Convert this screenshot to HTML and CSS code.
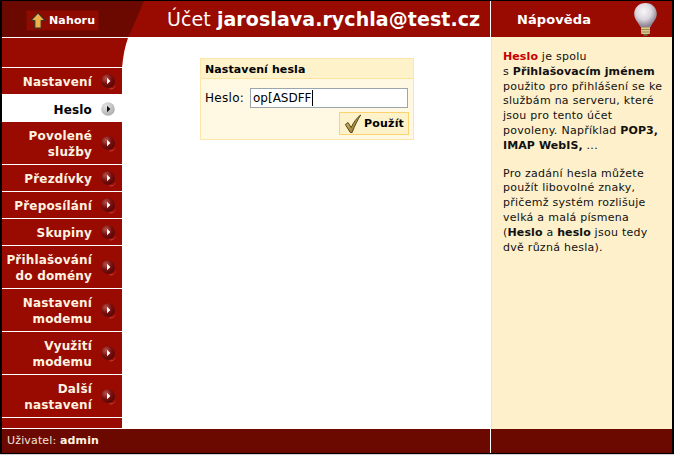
FILE: index.html
```html
<!DOCTYPE html>
<html lang="cs">
<head>
<meta charset="utf-8">
<title>Nastavení hesla</title>
<link rel="stylesheet" href="styles.css">
</head>
<body>
<svg class="defs" width="0" height="0" aria-hidden="true">
  <defs>
    <radialGradient id="ball" cx="0.35" cy="0.3" r="0.8">
      <stop offset="0" stop-color="#b5554f"/><stop offset="0.5" stop-color="#7a1010"/><stop offset="1" stop-color="#4a0505"/>
    </radialGradient>
    <radialGradient id="ballGrey" cx="0.35" cy="0.3" r="0.8">
      <stop offset="0" stop-color="#e4e4e4"/><stop offset="1" stop-color="#a9a9a9"/>
    </radialGradient>
    <radialGradient id="bulb" cx="0.42" cy="0.35" r="0.62">
      <stop offset="0" stop-color="#f8f6f8"/><stop offset="0.55" stop-color="#dcd6de"/><stop offset="1" stop-color="#8f8496"/>
    </radialGradient>
    <linearGradient id="gold" x1="0" y1="0" x2="1" y2="1">
      <stop offset="0" stop-color="#ecd07c"/><stop offset="1" stop-color="#7d5e14"/>
    </linearGradient>
    <symbol id="arrow" viewBox="0 0 16 16">
      <path d="M9 15.500a6.500 6.500 0 0 0 6-4.500 7 7 0 0 1-7 3.500z" fill="#c2453c"/>
      <circle cx="7" cy="7" r="6.800" fill="url(#ball)"/>
      <path d="M6 3.800l3.400 3.200-3.400 3.200z" fill="#fff"/>
    </symbol>
    <symbol id="arrowCur" viewBox="0 0 16 16">
      <circle cx="7" cy="7" r="6.800" fill="url(#ballGrey)"/>
      <path d="M6 3.800l3.400 3.200-3.400 3.200z" fill="#111"/>
    </symbol>
  </defs>
</svg>
<div class="frame">
  <header class="top">
    <div class="top-main">
      <div class="top-left">
        <a class="up" href="#">
          <svg class="up-icon" width="16" height="17" viewBox="0 0 16 17"><path d="M8 .8L15.200 8.500H11.200V16H4.800V8.500H.8z" fill="#eeb14a" stroke="#3a3226" stroke-width="1.200" stroke-linejoin="round"/></svg>
          <span>Nahoru</span>
        </a>
      </div>
      <h1 class="title">Účet <b>jaroslava.rychla@test.cz</b></h1>
    </div>
    <div class="top-help">
      <span class="help-title">Nápověda</span>
      <svg class="bulb" width="25" height="34" viewBox="0 0 25 34">
        <rect x="8" y="23" width="9" height="9" rx="1" fill="#d8c98e"/>
        <path d="M8 25h9M8 27.500h9M8 30h9" stroke="#9a8a55"/>
        <path d="M10 32h5l-1 2h-3z" fill="#6d6246"/>
        <path d="M12.500 1C5.800 1 1.200 5.800 1.200 12c0 5 3.800 8 6.300 13h10c2.500-5 6.300-8 6.300-13C23.800 5.800 19.200 1 12.500 1z" fill="url(#bulb)"/>
      </svg>
    </div>
  </header>
  <div class="middle">
    <nav class="side">
      <div class="side-top"></div>
      <a class="item" href="#"><span>Nastavení</span><svg class="ic"><use href="#arrow"/></svg></a>
      <a class="item cur" href="#"><span>Heslo</span><svg class="ic"><use href="#arrowCur"/></svg></a>
      <a class="item" href="#"><span>Povolené<br>služby</span><svg class="ic"><use href="#arrow"/></svg></a>
      <a class="item" href="#"><span>Přezdívky</span><svg class="ic"><use href="#arrow"/></svg></a>
      <a class="item" href="#"><span>Přeposílání</span><svg class="ic"><use href="#arrow"/></svg></a>
      <a class="item" href="#"><span>Skupiny</span><svg class="ic"><use href="#arrow"/></svg></a>
      <a class="item" href="#"><span>Přihlašování<br>do domény</span><svg class="ic"><use href="#arrow"/></svg></a>
      <a class="item" href="#"><span>Nastavení<br>modemu</span><svg class="ic"><use href="#arrow"/></svg></a>
      <a class="item" href="#"><span>Využití<br>modemu</span><svg class="ic"><use href="#arrow"/></svg></a>
      <a class="item" href="#"><span>Další<br>nastavení</span><svg class="ic"><use href="#arrow"/></svg></a>
      <div class="side-end"></div>
    </nav>
    <main class="content">
      <section class="box">
        <h2 class="box-head">Nastavení hesla</h2>
        <div class="box-body">
          <div class="row">
            <label class="lbl">Heslo:</label>
            <div class="field"><span class="val">op[ASDFF</span></div>
          </div>
          <div class="actions">
            <button class="btn" type="button">
              <svg width="18" height="20" viewBox="0 0 20 20" preserveAspectRatio="none"><path d="M1.500 10.500L4.500 8.500L8 13.500C10.500 8.500 13.500 4.500 18.500 1C15 6 12 11.500 9 18.500H7z" fill="url(#gold)" stroke="#4f4014" stroke-width="1" stroke-linejoin="round"/></svg>
              <span>Použít</span>
            </button>
          </div>
        </div>
      </section>
    </main>
    <aside class="help">
      <p><b class="red">Heslo</b> je spolu s&nbsp;<b>Přihlašovacím jménem</b> použito pro přihlášení se ke službám na serveru, které jsou pro tento účet povoleny. Například <b>POP3, IMAP WebIS,</b> ...</p>
      <p>Pro zadání hesla můžete použít libovolné znaky, přičemž systém rozlišuje velká a malá písmena (<b>Heslo</b> a <b>heslo</b> jsou tedy dvě různá hesla).</p>
    </aside>
  </div>
  <footer class="bottom">
    <div class="user">Uživatel: <b>admin</b></div>
    <div class="bottom-help"></div>
  </footer>
</div>
</body>
</html>
```
FILE: styles.css
```css
* { box-sizing: border-box; }
html, body { margin: 0; padding: 0; }
body { background: #d4d4d4; font-family: "DejaVu Sans", sans-serif; font-size: 11px; color: #000; height: 455px; overflow: hidden; }
.defs { display: block; height: 0; }
.frame { width: 674px; height: 454px; background: #fff; border: solid #000; border-width: 1px 2px; display: flex; flex-direction: column; }

.top { height: 36px; display: flex; flex: none; }
.top-main { width: 488px; background: #990a00; display: flex; align-items: center; }
.top-left { width: 144px; height: 36px; flex: none; background: #6b0900; clip-path: polygon(0 0, 142px 0, 136px 14px, 130px 28px, 126px 36px, 0 36px); padding: 9px 0 0 24px; }
.up { width: 73px; height: 21px; background: #8f0a00; border: 1px solid #7a0a00; display: flex; align-items: center; padding-left: 3px; gap: 3px; color: #fff; font-weight: bold; font-size: 11px; letter-spacing: .15px; text-decoration: none; }
.up-icon { flex: none; }
.title { margin: 0 0 0 21px; font-size: 19px; font-weight: normal; color: #fff; white-space: nowrap; line-height: 36px; letter-spacing: .07px; }
.top-help { margin-left: 1px; width: 181px; background: #990a00; display: flex; align-items: center; color: #fff; padding-left: 26px; position: relative; }
.help-title { font-weight: bold; font-size: 13px; letter-spacing: .1px; }
.bulb { position: absolute; left: 142px; top: 1px; }

.middle { flex: 1; display: flex; min-height: 0; }
.side { width: 120px; flex: none; display: flex; flex-direction: column; }
.side-top { width: 126px; height: 30px; flex: none; margin-top: 1px; background: #990a00; border-bottom: 1px solid #fff; clip-path: path("M0 0H126C123 8 121 18 120 30H0Z"); }
.item { display: flex; align-items: center; justify-content: flex-end; gap: 9px; padding: 2px 7px 0 2px; flex: none; height: 27px; background: #990a00; color: #fdf2e0; font-weight: bold; font-size: 12px; line-height: 16px; text-align: right; text-decoration: none; border-bottom: 1px solid #fff; letter-spacing: .17px; }
.item span { display: block; }
.cur { background: #fff; color: #000; border-bottom: 0; }
.ic { width: 16px; height: 16px; flex: none; margin-right: -2px; }
.item:has(br) { height: 43px; }
.side-end { flex: 1; background: #990a00; margin-bottom: 1px; }

.content { flex: 1; min-width: 0; padding: 21px 0 0 78px; }
.box { width: 214px; background: #fff8e3; border: 1px solid #fee6a8; }
.box-head { margin: 0; height: 20px; background: #fef2cb; border-bottom: 1px solid #fee39f; font-size: 11px; font-weight: bold; line-height: 22px; padding-left: 4px; letter-spacing: .1px; }
.box-body { padding: 9px 4px 4px 4px; }
.row { display: flex; align-items: center; gap: 5px; }
.lbl { font-size: 12px; width: 40px; flex: none; letter-spacing: .3px; white-space: nowrap; }
.field { width: 158px; height: 20px; background: #fff; border: 1px solid #9aa5ad; padding-left: 2px; font-size: 12px; line-height: 18px; }
.val { display: inline-block; height: 16px; line-height: 16px; border-right: 1px solid #000; vertical-align: top; margin-top: 1px; }
.actions { display: flex; justify-content: flex-end; margin-top: 4px; }
.btn { width: 70px; height: 23px; background: #fef2cb; border: 1px solid #fed36f; display: flex; align-items: center; gap: 2px; padding: 0 0 0 4px; font-family: inherit; font-size: 11px; font-weight: bold; color: #000; letter-spacing: .2px; }

.help { margin-left: 1px; width: 181px; background: #fdf0cb; border-left: 1px solid #fee39f; padding: 13px 8px 0 11px; line-height: 14.8px; color: #111; letter-spacing: .27px; }
.help p { margin: 0 0 13px; }
.help b { letter-spacing: .1px; }
.red { color: #c60000; }

.bottom { height: 24px; flex: none; display: flex; color: #fff; }
.user { width: 488px; background: #6b0900; padding-left: 5px; line-height: 23px; color: #f3e3d8; letter-spacing: .15px; }
.user b { color: #fdf2e0; }
.bottom-help { margin-left: 1px; width: 181px; background: #6b0900; }
```
